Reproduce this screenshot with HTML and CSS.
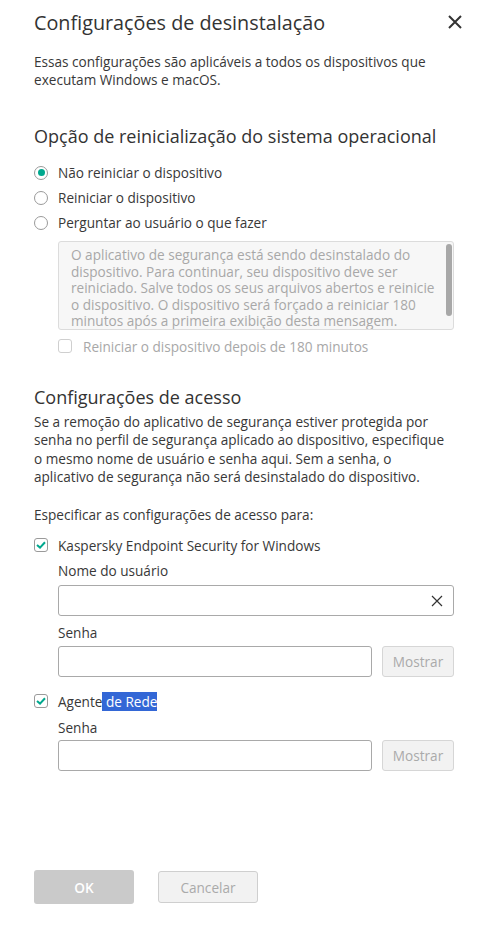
FILE: index.html
```html
<!DOCTYPE html>
<html lang="pt">
<head>
<meta charset="utf-8">
<title>Configurações de desinstalação</title>
<link rel="stylesheet" href="styles.css">
</head>
<body>
<div class="dialog">
  <div class="header">
    <h1 class="title">Configurações de desinstalação</h1>
    <svg class="close" width="14" height="14" viewBox="0 0 14 14"><path d="M1 1L13 13M13 1L1 13" stroke="#333" stroke-width="2" fill="none"/></svg>
  </div>
  <p class="desc">Essas configurações são aplicáveis a todos os dispositivos que executam Windows e macOS.</p>

  <h2 class="h2 h2-first">Opção de reinicialização do sistema operacional</h2>
  <div class="radios">
    <div class="radio-row"><span class="radio checked"></span><span>Não reiniciar o dispositivo</span></div>
    <div class="radio-row"><span class="radio"></span><span>Reiniciar o dispositivo</span></div>
    <div class="radio-row"><span class="radio"></span><span>Perguntar ao usuário o que fazer</span></div>
  </div>
  <div class="indent">
    <div class="textarea">
      <div class="ta-text">O aplicativo de segurança está sendo desinstalado do dispositivo. Para continuar, seu dispositivo deve ser reiniciado. Salve todos os seus arquivos abertos e reinicie o dispositivo. O dispositivo será forçado a reiniciar 180 minutos após a primeira exibição desta mensagem.</div>
      <div class="scrollbar"></div>
    </div>
    <div class="check-row disabled"><span class="checkbox"></span><span>Reiniciar o dispositivo depois de 180 minutos</span></div>
  </div>

  <h2 class="h2 h2-second">Configurações de acesso</h2>
  <p class="para">Se a remoção do aplicativo de segurança estiver protegida por senha no perfil de segurança aplicado ao dispositivo, especifique o mesmo nome de usuário e senha aqui. Sem a senha, o aplicativo de segurança não será desinstalado do dispositivo.</p>
  <p class="spec">Especificar as configurações de acesso para:</p>

  <div class="check-row kes"><span class="checkbox on"><svg width="10" height="8" viewBox="0 0 10 8"><path d="M1 4L4 6.6L9 1.2" stroke="#00a88e" stroke-width="2" fill="none"/></svg></span><span>Kaspersky Endpoint Security for Windows</span></div>
  <div class="indent">
    <div class="label l-user">Nome do usuário</div>
    <div class="input full"><svg class="clear" width="12" height="12" viewBox="0 0 12 12"><path d="M1 1L11 11M11 1L1 11" stroke="#333" stroke-width="1.2" fill="none"/></svg></div>
    <div class="label l-pass">Senha</div>
    <div class="pw-row"><div class="input pw"></div><div class="show-btn">Mostrar</div></div>
  </div>

  <div class="check-row agent"><span class="checkbox on"><svg width="10" height="8" viewBox="0 0 10 8"><path d="M1 4L4 6.6L9 1.2" stroke="#00a88e" stroke-width="2" fill="none"/></svg></span><span>Agente<span class="sel"> de Rede</span></span></div>
  <div class="indent">
    <div class="label l-pass2">Senha</div>
    <div class="pw-row pw2"><div class="input pw"></div><div class="show-btn">Mostrar</div></div>
  </div>

  <div class="footer">
    <div class="btn ok">OK</div>
    <div class="btn cancel">Cancelar</div>
  </div>
</div>
</body>
</html>
```
FILE: styles.css
```css
* { box-sizing: border-box; }
html, body { margin: 0; padding: 0; background: #fff; }
body {
  font-family: "Open Sans", Lato, sans-serif;
  color: #383838;
  font-size: 13.6px;
}
.dialog {
  width: 486px;
  height: 933px;
  padding: 12px 32px 0 34px;
  display: flex;
  flex-direction: column;
}
.header {
  display: flex;
  justify-content: space-between;
  align-items: center;
  height: 22px;
}
.title {
  margin: 0;
  font-size: 19.8px;
  font-weight: 400;
  line-height: 22px;
  color: #333;
}
.close { margin-right: -8px; margin-top: -2px; }
.desc {
  margin: 19px 0 0;
  line-height: 18px;
}
.h2 {
  margin: 0;
  font-size: 18px;
  font-weight: 400;
  line-height: 24px;
  color: #333;
}
.h2-first { margin-top: 35px; }
.radios { margin-top: 12px; display: flex; flex-direction: column; }
.radio-row {
  display: flex;
  align-items: center;
  height: 25px;
  gap: 10px;
}
.radio {
  width: 14px;
  height: 14px;
  border: 1px solid #9a9a9a;
  border-radius: 50%;
  display: flex;
  align-items: center;
  justify-content: center;
  flex: none;
}
.radio.checked::after {
  content: "";
  width: 7px;
  height: 7px;
  border-radius: 50%;
  background: #00a88e;
}
.indent { padding-left: 24px; display: flex; flex-direction: column; }
.textarea {
  margin-top: 6px;
  height: 89px;
  width: 396px;
  border: 1px solid #dcdcdc;
  border-radius: 3px;
  background: #f7f7f7;
  position: relative;
  overflow: hidden;
}
.ta-text {
  padding: 5px 14px 0 12px;
  color: #a8a8a8;
  line-height: 16.6px;
  font-size: 13.6px;
}
.scrollbar {
  position: absolute;
  right: 1px;
  top: 2px;
  width: 6px;
  height: 72px;
  background: #a8a8a8;
  border-radius: 3px;
}
.check-row {
  display: flex;
  align-items: center;
  height: 20px;
  gap: 10px;
}
.checkbox {
  width: 14px;
  height: 14px;
  border: 1px solid #9a9a9a;
  border-radius: 3px;
  display: flex;
  align-items: center;
  justify-content: center;
  flex: none;
}
.check-row.disabled { margin-top: 6px; color: #a8a8a8; gap: 11px; }
.check-row.disabled .checkbox { border-color: #cfcfcf; }
.h2-second { margin-top: 29px; }
.para { margin: 4px 0 0; padding-right: 6px; line-height: 18.3px; }
.spec { margin: 20px 0 0; line-height: 18px; }
.kes { margin-top: 11px; }
.label { line-height: 18px; }
.l-user { margin-top: 7px; }
.input {
  height: 31px;
  border: 1px solid #a9a9a9;
  border-radius: 3px;
  background: #fff;
  display: flex;
  align-items: center;
  justify-content: flex-end;
}
.input.full { margin-top: 5px; width: 396px; }
.clear { margin-right: 10px; }
.l-pass { margin-top: 8px; }
.pw-row { display: flex; gap: 10px; margin-top: 4px; }
.input.pw { width: 314px; }
.show-btn {
  width: 72px;
  height: 31px;
  border: 1px solid #d6d6d6;
  border-radius: 3px;
  background: #f2f2f2;
  color: #aaa;
  display: flex;
  align-items: center;
  justify-content: center;
}
.agent { margin-top: 14px; }
.sel { background: #3367d6; color: #fff; }
.l-pass2 { margin-top: 8px; }
.pw2 { margin-top: 3px; }
.footer {
  margin-top: auto;
  margin-bottom: 29px;
  display: flex;
  gap: 24px;
  align-items: center;
}
.btn {
  width: 100px;
  display: flex;
  align-items: center;
  justify-content: center;
  border-radius: 3px;
}
.ok {
  height: 34px;
  background: #cacaca;
  color: #fff;
  font-weight: 600;
}
.cancel {
  height: 32px;
  background: #f2f2f2;
  border: 1px solid #cfcfcf;
  color: #aaa;
}
```
